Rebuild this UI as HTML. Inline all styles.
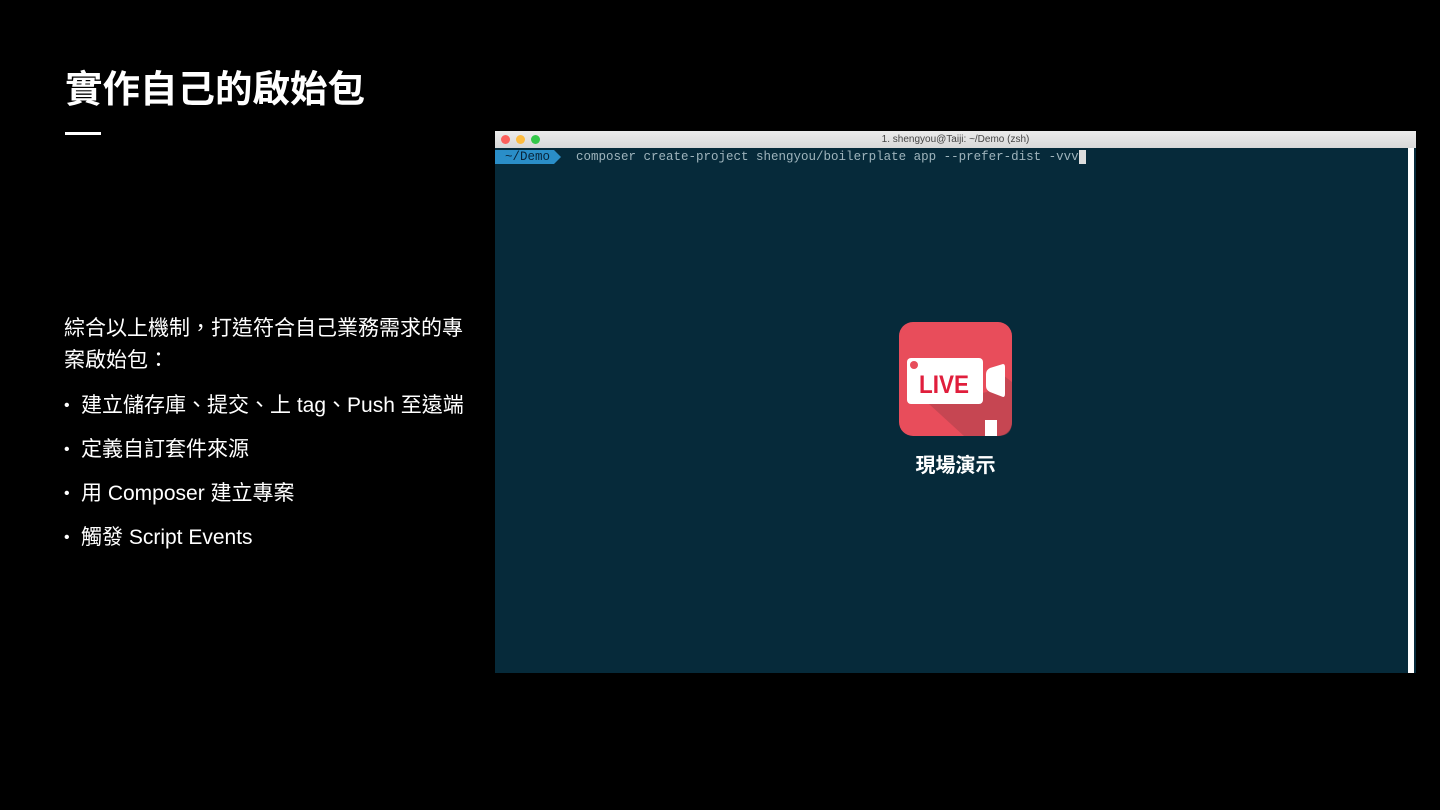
<!DOCTYPE html>
<html><head><meta charset="utf-8"><style>
body{margin:0;width:1440px;height:810px;background:#000;position:relative;overflow:hidden;font-family:"Liberation Sans","Noto Sans CJK TC",sans-serif;color:#fff}
.t{position:absolute;left:65px;top:64px;font-size:37.5px;font-weight:bold;line-height:50px}
.bar{position:absolute;left:65px;top:132px;width:36px;height:3px;background:#fff}
.p{position:absolute;left:64px;font-size:21px;line-height:32px}
.b{position:absolute;left:64px;font-size:21px;line-height:32px}
.b::before{content:"•";position:absolute;left:0;font-size:16px}
.b span{margin-left:17px}
.win{position:absolute;left:495px;top:131px;width:921px;height:542px;background:#062a3a}
.tb{height:17px;background:linear-gradient(#ececec,#d8d8d8);position:relative;font-size:10px;color:#444;text-align:center;line-height:17px}
.d{position:absolute;top:4px;width:9px;height:9px;border-radius:50%}
.cmd{position:absolute;top:19px;left:0;font-family:"Liberation Mono",monospace;font-size:12.5px;color:#9fb4bc;white-space:pre;line-height:14px}
</style></head><body>
<div class="t">實作自己的啟始包</div>
<div class="bar"></div>
<div class="p" style="top:313px">綜合以上機制，打造符合自己業務需求的專<br>案啟始包：</div>
<div class="b" style="top:390px"><span>建立儲存庫、提交、上 tag、Push 至遠端</span></div>
<div class="b" style="top:434px"><span>定義自訂套件來源</span></div>
<div class="b" style="top:478px"><span>用 Composer 建立專案</span></div>
<div class="b" style="top:522px"><span>觸發 Script Events</span></div>
<div class="win">
<div class="tb"><span class="d" style="left:6px;background:#fc605c"></span><span class="d" style="left:21px;background:#fdbc40"></span><span class="d" style="left:36px;background:#34c84a"></span>1. shengyou@Taiji: ~/Demo (zsh)</div>
<div class="cmd"><span style="background:#2a8ec8;color:#08243a;padding:0 4px 0 10px">~/Demo</span><span style="display:inline-block;width:0;height:0;border-left:7px solid #2a8ec8;border-top:7px solid transparent;border-bottom:7px solid transparent;vertical-align:top"></span>  composer create-project shengyou/boilerplate app --prefer-dist -vvv<span style="background:#ddd">&nbsp;</span></div>
<div style="position:absolute;right:2px;top:17px;width:6px;height:525px;background:#fff"></div>
<svg style="position:absolute;left:404px;top:191px" width="113" height="114" viewBox="0 0 113 114">
<rect width="113" height="114" rx="14" fill="#e84d5b"/>
<path d="M30 82 L65 114 L99 114 Q113 114 113 100 L113 60 L100 50 L88 70 Z" fill="#b8434f" opacity=".7"/>
<rect x="8" y="36" width="76" height="46" rx="4" fill="#fff"/>
<circle cx="15" cy="43" r="4" fill="#e84d5b"/>
<text x="20" y="71" font-family="Liberation Sans" font-weight="bold" font-size="25" fill="#e01e3c" textLength="50" lengthAdjust="spacingAndGlyphs">LIVE</text>
<path d="M87 52 Q87 48 91 46 L104 42 Q106 42 106 45 L106 72 Q106 75 104 75 L91 70 Q87 68 87 64 Z" fill="#fff"/>
<rect x="86" y="98" width="12" height="16" fill="#fff"/>
</svg>
<div style="position:absolute;left:404px;top:318px;width:113px;text-align:center;font-size:20px;font-weight:bold">現場演示</div>
</div>
</body></html>
